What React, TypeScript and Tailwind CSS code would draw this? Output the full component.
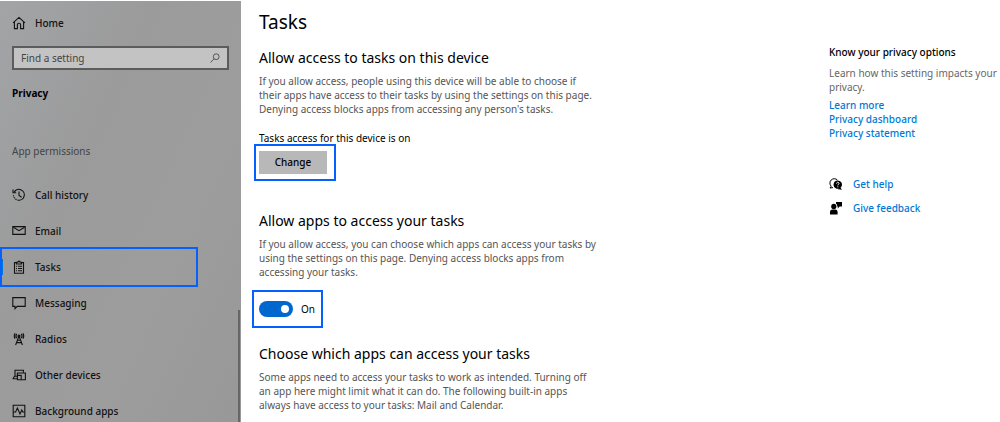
import type { ReactNode } from 'react';
import { useState } from 'react';

function Icon({ children }: { children: ReactNode }) {
  return (
    <svg
      viewBox="0 0 14 14"
      className="h-3.5 w-3.5 shrink-0"
      fill="none"
      stroke="currentColor"
      strokeWidth="1.1"
      aria-hidden="true"
    >
      {children}
    </svg>
  );
}

const navItems = [
  {
    label: 'Call history',
    icon: (
      <>
        <path d="M2.2 4.1A5.4 5.4 0 1 1 5.4 12" />
        <path d="M1 1.6v3.2h3.2M7 3.6v3.8l2.6 1.8" />
        <path d="M1.4 7.2a5.6 5.6 0 0 0 3.6 4.7" strokeDasharray="1.2 1" />
      </>
    )
  },
  {
    label: 'Email',
    icon: (
      <>
        <path d="M.8 2.6h12.4v7.8H.8z" />
        <path d="M1.4 3.2 7 6.6l5.6-3.4" />
      </>
    )
  },
  {
    label: 'Tasks',
    icon: (
      <>
        <path d="M4.5 2.6H2.5v10.6h9V2.6h-2" />
        <path d="M4.6 4V2.2h1.3a1.1 1.1 0 0 1 2.2 0h1.3V4z" />
        <path d="M4 6.3h1M6 6.3h4M4 8.5h1M6 8.5h4M4 10.7h1M6 10.7h4" />
      </>
    )
  },
  {
    label: 'Messaging',
    icon: <path d="M.8 1.6h12.4v8.8H5.2L3 12.6v-2.2H.8z" />
  },
  {
    label: 'Radios',
    icon: (
      <>
        <path d="M3.6 13 6.6 5h.8l3 8M4.6 10.6h4.8M5.4 8.2h3.2" />
        <path d="M4.8 1.8a3.4 3.4 0 0 0 0 4.4M9.2 1.8a3.4 3.4 0 0 1 0 4.4M3.1 1.2a5 5 0 0 0 0 5.4M10.9 1.2a5 5 0 0 1 0 5.4" />
        <circle cx="7" cy="4" r="1" fill="currentColor" />
      </>
    )
  },
  {
    label: 'Other devices',
    icon: (
      <>
        <path d="M3 8.2V2.2h8.4v2.6M.6 10.8h4.6M2.6 8.2.8 10.8M2.6 8.2h2.8" />
        <path d="M5.4 7.4V5h8v6.8H9.2" />
        <path d="M5.4 7.4h3.8v4.4H5.4z" />
      </>
    )
  },
  {
    label: 'Background apps',
    icon: (
      <>
        <path d="M1.2 1.2h11.6v11.6H1.2z" />
        <path d="M1.4 8h2.2l1.8-4 2.6 6 1.8-4 1 2h1.8" />
      </>
    )
  }
];

function Section({ title, children }: { title: string; children: ReactNode }) {
  return (
    <>
      <h2 className="text-[14px] leading-5 text-black">{title}</h2>
      <p className="mt-1.5 text-[10px] leading-[14px] text-[#555]">{children}</p>
    </>
  );
}

function Sidebar() {
  return (
    <aside className="relative mt-px w-[241px] shrink-0 bg-[linear-gradient(115deg,#a2a4a7_0%,#9b9b9b_35%,#9e9d9e_65%,#989898_100%)] font-medium text-[#111]">
      <a href="#home" className="ml-3 flex h-11 items-center gap-[9px]">
        <Icon>
          <path d="M1 6.8 7 1.4l6 5.4M2.4 5.8v6.8h3V8.8a1.6 1.6 0 0 1 3.2 0v3.8h3V5.8" />
        </Icon>
        Home
      </a>
      <label className="mx-3 mt-px flex h-6 items-center border-2 border-[#5c5c5c] bg-[#c3c3c3] px-[7px]">
        <input
          type="search"
          aria-label="Find a setting"
          placeholder="Find a setting"
          className="min-w-0 flex-1 bg-transparent font-normal outline-none placeholder:text-[#444]"
        />
        <svg viewBox="0 0 10 10" className="h-2.5 w-2.5 text-[#555]" fill="none" stroke="currentColor" aria-hidden="true">
          <circle cx="6.2" cy="3.7" r="2.9" />
          <path d="M4.1 5.8.5 9.5" />
        </svg>
      </label>
      <h2 className="ml-3 mt-[15px] font-bold leading-4 text-black">Privacy</h2>
      <h3 className="ml-3 mt-10 font-normal leading-5 text-[#444]">App permissions</h3>
      <nav className="mt-4">
        {navItems.map((item) => (
          <a key={item.label} href="#" className="relative flex h-9 items-center gap-[9px] pl-3">
            {item.label === 'Tasks' && (
              <>
                <span className="absolute left-0 top-2.5 h-4 w-[3px] bg-[#0078d7]" />
                <span className="absolute -top-0.5 left-0 h-10 w-[198px] border-2 border-[#0560fd]" />
              </>
            )}
            <Icon>{item.icon}</Icon>
            {item.label}
          </a>
        ))}
      </nav>
      <span className="absolute bottom-0 right-px h-28 w-0.5 bg-[#666]" />
    </aside>
  );
}

export default function App() {
  const [allowed, setAllowed] = useState(true);

  return (
    <div className="flex h-screen overflow-hidden whitespace-nowrap bg-white font-['Noto_Sans',sans-serif] text-[10px] text-black">
      <Sidebar />
      <main className="flex-1 pl-[18px]">
        <h1 className="mt-2 text-[19px] leading-7">Tasks</h1>
        <div className="mt-3">
          <Section title="Allow access to tasks on this device">
            If you allow access, people using this device will be able to choose if
            <br />
            their apps have access to their tasks by using the settings on this page.
            <br />
            Denying access blocks apps from accessing any person&apos;s tasks.
          </Section>
          <p className="mt-[15px] leading-[14px]">Tasks access for this device is on</p>
          <div className="-ml-[5px] -mt-px w-[82px] border-2 border-[#0560fd] py-[5px] pl-[3px]">
            <button type="button" className="block h-[23px] w-[68px] bg-[#b8b8b8] font-medium">
              Change
            </button>
          </div>
        </div>
        <div className="mt-[30px]">
          <Section title="Allow apps to access your tasks">
            If you allow access, you can choose which apps can access your tasks by
            <br />
            using the settings on this page. Denying access blocks apps from
            <br />
            accessing your tasks.
          </Section>
          <label className="-ml-[7px] mt-[11px] flex h-[38px] w-[71px] items-center gap-2 border-2 border-[#0560fd] pl-[5px]">
            <input
              type="checkbox"
              role="switch"
              checked={allowed}
              onChange={(e) => setAllowed(e.target.checked)}
              className="peer sr-only"
            />
            <span className="flex h-4 w-[34px] items-center rounded-full bg-[#777] px-1 peer-checked:justify-end peer-checked:bg-[#0067cf]">
              <span className="h-2 w-2 rounded-full bg-white" />
            </span>
            {allowed ? 'On' : 'Off'}
          </label>
        </div>
        <div className="mt-4">
          <Section title="Choose which apps can access your tasks">
            Some apps need to access your tasks to work as intended. Turning off
            <br />
            an app here might limit what it can do. The following built-in apps
            <br />
            always have access to your tasks: Mail and Calendar.
          </Section>
        </div>
      </main>
      <aside className="w-[171px] shrink-0 pt-11 leading-[14px]">
        <h2 className="font-medium leading-4">Know your privacy options</h2>
        <p className="mt-1.5 text-[#666]">
          Learn how this setting impacts your
          <br />
          privacy.
        </p>
        <div className="mt-1 flex flex-col items-start font-medium text-[#0078d7]">
          <a href="#learn">Learn more</a>
          <a href="#dashboard">Privacy dashboard</a>
          <a href="#statement">Privacy statement</a>
        </div>
        <div className="mt-9 flex flex-col gap-2 font-medium text-[#0078d7]">
          <a href="#help" className="flex h-4 items-center gap-2.5">
            <svg viewBox="0 0 14 14" className="h-3.5 w-3.5 text-black" aria-hidden="true">
              <path d="M2.2 9.2A4.2 4.2 0 1 1 8.4 3M2.2 9.2 1 11l3-.4" fill="none" stroke="currentColor" />
              <path d="M8.8 3.4a4.2 4.2 0 1 1-1.8 8 4.2 4.2 0 0 1 1.8-8M11 10l2 2.8-4-.6z" fill="currentColor" />
              <path d="M7.6 6.6c0-1.8 2.6-1.6 2.4 0-.1.8-1.2.8-1.2 1.8M8.8 9.4v.9" fill="none" stroke="white" />
            </svg>
            Get help
          </a>
          <a href="#feedback" className="flex h-4 items-center gap-2.5">
            <svg viewBox="0 0 14 14" className="h-3.5 w-3.5 text-black" fill="currentColor" aria-hidden="true">
              <circle cx="4.8" cy="5.4" r="2.6" />
              <path d="M1 13.4V11c0-1.4 1-2.4 2.4-2.4h2.8c1.4 0 2.4 1 2.4 2.4v2.4zM7 1h6v4.6h-2.4L8.8 7.4V5.6H8.2C8.2 3.6 7.6 3 7 2.8z" />
            </svg>
            Give feedback
          </a>
        </div>
      </aside>
    </div>
  );
}
